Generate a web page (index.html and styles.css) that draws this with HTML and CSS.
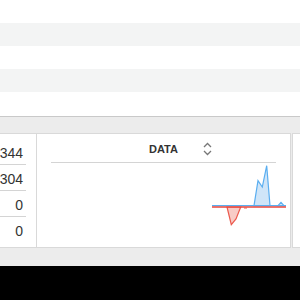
FILE: index.html
```html
<!DOCTYPE html>
<html lang="en">
<head>
    <meta charset="UTF-8">
    <title>Data panel</title>
    <link rel="stylesheet" href="styles.css">
</head>
<body>

    <!-- Daftar baris di atas -->
    <div class="list">
        <div class="list-row"></div>
        <div class="list-row alt"></div>
        <div class="list-row"></div>
        <div class="list-row alt"></div>
        <div class="list-row last"></div>
    </div>

    <!-- Panel kartu -->
    <div class="panel">
        <div class="cards">
            <div class="card card-left">
                <div class="num-row">1344</div>
                <div class="num-row">1304</div>
                <div class="num-row">0</div>
                <div class="num-row">0</div>
            </div>

            <div class="card card-main">
                <div class="card-head">
                    <span></span>
                    <span class="head-title">DATA</span>
                    <span class="head-sort">
                        <svg width="9" height="14" viewBox="0 0 9 14">
                            <path d="M1 5 L4.5 1.5 L8 5 M1 9 L4.5 12.5 L8 9" fill="none" stroke="#777" stroke-width="1.3"/>
                        </svg>
                    </span>
                </div>
                <svg class="chart" width="252" height="82" viewBox="0 0 252 82">
                    <path d="M190 44 L194.3 61.7 L199 56 L203.7 44 Z" fill="#f8cbc6" stroke="#ec5a4e" stroke-width="1.2"/>
                    <path d="M217 42.7 L221 17.7 L225.3 24 L229.7 2.7 L233 42.7 Z" fill="#cfe5f8" stroke="#5aaef0" stroke-width="1.2"/>
                    <path d="M241 42.7 L244 39.3 L247 42.7 Z" fill="#cfe5f8" stroke="#5aaef0" stroke-width="1.2"/>
                    <line x1="175" y1="42.7" x2="249" y2="42.7" stroke="#5aaef0" stroke-width="1.2"/>
                    <line x1="175" y1="44" x2="249" y2="44" stroke="#e8473c" stroke-width="1.4"/>
                    <line x1="207" y1="45" x2="210" y2="45" stroke="#ec5a4e" stroke-width="1"/>
                </svg>
            </div>

            <div class="card card-right"></div>
        </div>
    </div>

    <div class="footer"></div>

</body>
</html>
```

FILE: styles.css
```css
body {
    margin: 0;
    width: 300px;
    height: 300px;
    overflow: hidden;
    font-family: "Liberation Sans", Arial, sans-serif;
    background-color: #fff;
}

/* Baris daftar */
.list {
    border-bottom: 1px solid #c9c9c9;
}

.list-row {
    height: 23px;
    background-color: #fff;
}

.list-row.alt {
    background-color: #f3f4f4;
}

.list-row.last {
    height: 24px;
}

/* Panel abu-abu */
.panel {
    height: 149px;
    box-sizing: border-box;
    padding-top: 16px;
    background-color: #ececec;
}

.cards {
    display: flex;
    height: 115px;
}

.card {
    box-sizing: border-box;
    height: 115px;
    background-color: #fff;
    border: 1px solid #d9d9d9;
    flex-shrink: 0;
}

.card-left {
    width: 80px;
    margin-left: -43px;
    padding: 5px 10px 0 0;
}

.num-row {
    height: 25px;
    line-height: 29px;
    text-align: right;
    padding-right: 3px;
    font-size: 14px;
    color: #333;
    border-bottom: 1px solid #d4d4d4;
}

.num-row:last-child {
    border-bottom: none;
}

.card-main {
    width: 254px;
    border-left: none;
}

.card-head {
    display: grid;
    grid-template-columns: 1fr auto 1fr;
    align-items: center;
    height: 28px;
    margin: 0 14px;
    border-bottom: 1px solid #d4d4d4;
}

.head-title {
    font-size: 11px;
    font-weight: bold;
    color: #333;
    padding-top: 2px;
}

.head-sort {
    display: flex;
    padding-left: 25px;
    padding-top: 2px;
}

.chart {
    display: block;
}

.card-right {
    width: 40px;
    margin-left: 1px;
}

.footer {
    height: 34px;
    background-color: #000;
}
```
